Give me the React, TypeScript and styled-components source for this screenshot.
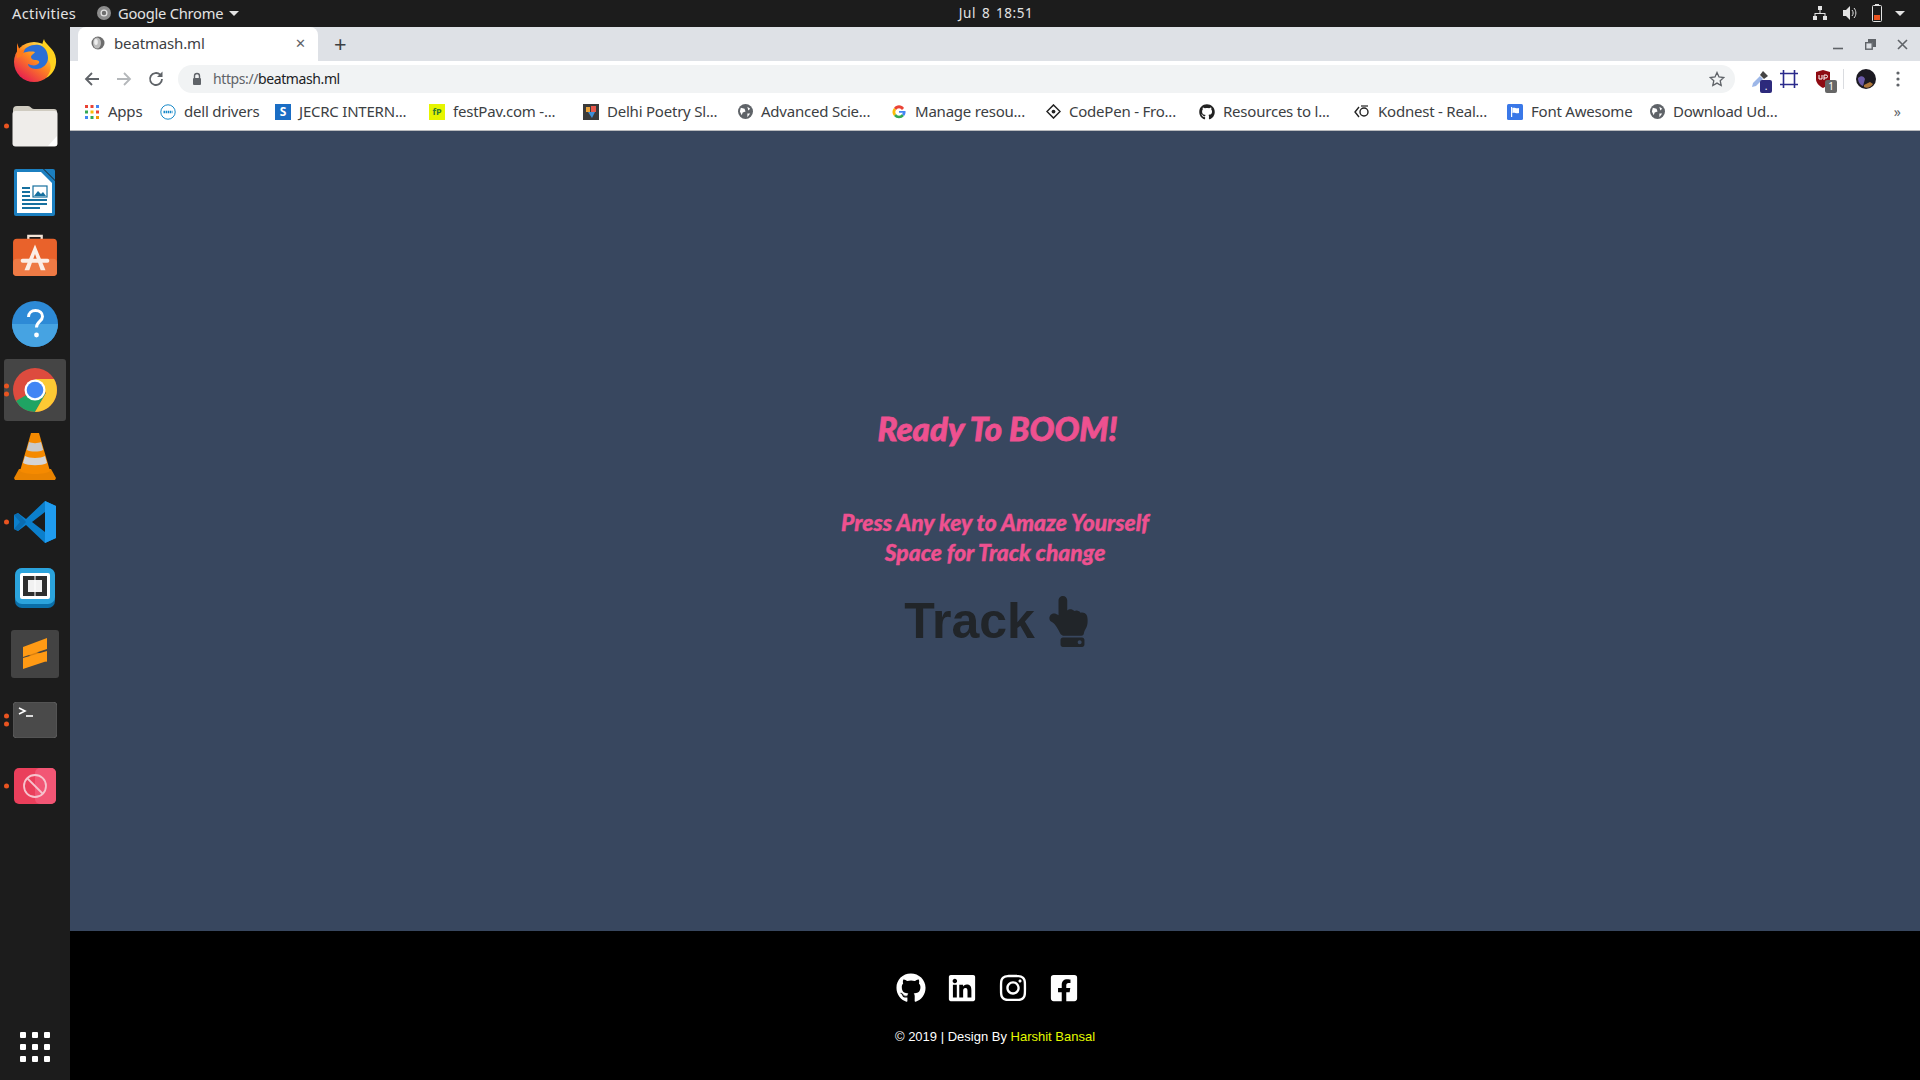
import React from 'react';
import styled, {createGlobalStyle} from 'styled-components';
import {FaGithub, FaLinkedin, FaInstagram, FaFacebookSquare, FaHandPointUp} from 'react-icons/fa';

const GlobalStyle = createGlobalStyle`
  html, body {
    margin: 0;
    padding: 0;
    height: 100%;
    overflow: hidden;
    background: #1c1c1c;
  }
  * {
    box-sizing: border-box;
  }
`
const Screen = styled.div`
  display: grid;
  grid-template-rows: 27px 1fr;
  grid-template-columns: 70px 1fr;
  width: 1920px;
  height: 1080px;
  font-family: "Noto Sans", sans-serif;
`
const TopBar = styled.header`
  grid-column: 1 / 3;
  display: grid;
  grid-template-columns: 1fr auto 1fr;
  align-items: center;
  background: #1c1c1c;
  color: #e3e3e3;
  font-size: 14.7px;
  padding: 0 12px 1px;
`
const TopLeft = styled.div`
  display: flex;
  align-items: center;
`
const ActivitiesLabel = styled.span`
  width: 85px;
  letter-spacing: 0.3px;
`
const AppName = styled.span`
  margin-left: 7px;
  letter-spacing: -0.25px;
`
const Caret = styled.span`
  width: 0;
  height: 0;
  margin-left: ${p => p.$gap ?? 6}px;
  border-left: 5px solid transparent;
  border-right: 5px solid transparent;
  border-top: 5px solid #e3e3e3;
`
const Clock = styled.div`
  margin-left: 72px;
  font-size: 13.5px;
  word-spacing: 2px;
  letter-spacing: 0.5px;
`
const TopRight = styled.div`
  display: flex;
  align-items: center;
  justify-content: flex-end;
  gap: 14px;
  padding-right: 3px;
`
const Dock = styled.nav`
  display: flex;
  flex-direction: column;
  background: #1c1c1c;
`
const DockItem = styled.div`
  position: relative;
  flex: none;
  display: flex;
  align-items: center;
  justify-content: center;
  height: 66px;
  ${p => p.$push && 'margin-top: auto;'}
`
const ActiveTile = styled.div`
  display: flex;
  align-items: center;
  justify-content: center;
  width: 62px;
  height: 62px;
  border-radius: 3px;
  background: #454545;
`
const RunDots = styled.div`
  position: absolute;
  left: 4px;
  top: 50%;
  transform: translateY(-50%);
  display: flex;
  flex-direction: column;
  gap: 3px;
`
const RunDot = styled.span`
  width: 5px;
  height: 5px;
  border-radius: 50%;
  background: #e95420;
`
const AppGrid = styled.div`
  display: grid;
  grid-template-columns: repeat(3, 6px);
  gap: 6px;
`
const GridDot = styled.span`
  width: 6px;
  height: 6px;
  border-radius: 1px;
  background: #fff;
`
const Browser = styled.div`
  display: flex;
  flex-direction: column;
  min-width: 0;
`
const TabStrip = styled.div`
  display: flex;
  align-items: flex-end;
  flex: none;
  height: 34px;
  padding-left: 8px;
  background: #dee1e6;
`
const Tab = styled.div`
  display: flex;
  align-items: center;
  width: 240px;
  height: 34px;
  padding: 0 12px 2px 13px;
  border-radius: 8px 8px 0 0;
  background: #fff;
  color: #3c4043;
  font-size: 15px;
`
const TabTitle = styled.span`
  flex: 1;
  margin-left: 9px;
  letter-spacing: -0.15px;
`
const TabClose = styled.span`
  color: #5f6368;
  font-size: 13px;
  line-height: 1;
`
const NewTab = styled.span`
  margin: 0 0 2px 16px;
  color: #3c4043;
  font-size: 22px;
  font-weight: 400;
  align-self: center;
  line-height: 1;
`
const WindowControls = styled.div`
  display: flex;
  align-items: center;
  gap: 21px;
  margin-left: auto;
  padding-right: 12px;
  height: 100%;
`
const Toolbar = styled.div`
  display: flex;
  align-items: center;
  flex: none;
  height: 32px;
  padding: 4px 0 0 13px;
  background: #fff;
`
const NavGroup = styled.div`
  display: flex;
  align-items: center;
  gap: 14px;
  width: 95px;
`
const Omnibox = styled.div`
  display: flex;
  align-items: center;
  width: 1557px;
  height: 28px;
  padding: 0 10px 0 13px;
  border-radius: 14px;
  background: #f1f3f4;
  font-size: 14px;
  color: #202124;
`
const UrlText = styled.span`
  flex: 1;
  margin-left: 10px;
  padding-bottom: 2px;
  letter-spacing: -0.4px;
`
const UrlScheme = styled.span`
  color: #5f6368;
`
const ExtensionGroup = styled.div`
  display: flex;
  align-items: center;
  padding-left: 10px;
`
const ExtensionSlot = styled.div`
  position: relative;
  display: flex;
  justify-content: center;
  width: ${p => p.$w}px;
`
const ExtensionBadge = styled.span`
  position: absolute;
  right: ${p => p.$right}px;
  bottom: -5px;
  width: ${p => p.$w}px;
  height: 13px;
  border-radius: 2px;
  background: ${p => p.$bg};
  color: #fff;
  font-size: 10px;
  line-height: 13px;
  text-align: center;
`
const Divider = styled.span`
  width: 1px;
  height: 20px;
  background: #dadce0;
  margin-right: 12px;
`
const BookmarkBar = styled.div`
  display: flex;
  align-items: center;
  flex: none;
  height: 38px;
  padding-left: 14px;
  background: #fff;
  border-bottom: 1px solid #b9bbbe;
  color: #3c4043;
  font-size: 15px;
`
const Bookmark = styled.div`
  display: flex;
  align-items: center;
  gap: 8px;
  width: ${p => p.$w}px;
  flex: none;
`
const BookmarkLabel = styled.span`
  padding-bottom: 1px;
  white-space: nowrap;
  letter-spacing: -0.22px;
`
const Favicon = styled.span`
  display: flex;
  align-items: center;
  justify-content: center;
  flex: none;
  width: 16px;
  height: 16px;
  background: ${p => p.$bg ?? 'transparent'};
  color: ${p => p.$fg ?? '#fff'};
  font-size: ${p => p.$size ?? 11}px;
  font-weight: 700;
  line-height: 1;
`
const Overflow = styled.span`
  margin-left: auto;
  padding-right: 19px;
  color: #5f6368;
  font-size: 14px;
`
const Page = styled.main`
  flex: 1;
  display: flex;
  flex-direction: column;
  align-items: center;
  padding-top: 277px;
  background: #38475f;
  min-height: 0;
`
const Heading = styled.h1`
  margin: 0 0 0 5px;
  color: #ee5190;
  font-family: "Lato", sans-serif;
  font-size: 33px;
  font-style: italic;
  font-weight: 900;
  line-height: 40px;
  -webkit-text-stroke: 0.8px #ee5190;
`
const Hint = styled.p`
  margin: 59px 0 0;
  color: #ee5190;
  font-family: "Lato", sans-serif;
  font-size: 22.8px;
  font-style: italic;
  font-weight: 900;
  line-height: 30px;
  text-align: center;
  -webkit-text-stroke: 0.4px #ee5190;
`
const TrackLabel = styled.div`
  display: flex;
  align-items: center;
  gap: 8px;
  margin: 25px 0 0 8px;
  color: #212529;
  font-family: "Liberation Sans", sans-serif;
  font-size: 50px;
  font-weight: 700;
  line-height: 58px;
`
const Footer = styled.footer`
  flex: none;
  display: flex;
  flex-direction: column;
  align-items: center;
  height: 149px;
  padding-top: 42px;
  background: #000;
  color: #fff;
  font-family: "Liberation Sans", sans-serif;
  font-size: 13px;
`
const SocialRow = styled.div`
  display: flex;
  gap: 21px;
  font-size: 30px;
  line-height: 0;
  margin-right: 15px;
`
const Credit = styled.div`
  margin-top: 26px;
`
const CreditName = styled.span`
  color: #e4fb00;
`

const Firefox = () => (
	<svg width="46" height="46" viewBox="0 0 46 46">
		<defs>
			<linearGradient id="ffa" x1="0.8" y1="0.1" x2="0.2" y2="0.9">
				<stop offset="0" stopColor="#ffe14a"/>
				<stop offset="0.45" stopColor="#ff8a1f"/>
				<stop offset="1" stopColor="#e8234e"/>
			</linearGradient>
		</defs>
		<circle cx="22" cy="25" r="20" fill="url(#ffa)"/>
		<path d="M32 2c1 6 11 9 12 20 1 9-4 16-10 19 5-6 6-12 3-17-2-4-7-7-7-14 0-3 1-6 2-8z" fill="#ffd21f"/>
		<path d="M10 16c3-6 10-9 17-8 5 1 9 6 9 13 0 6-5 11-12 11-5 0-8-3-8-5 4 2 9 2 11-1 1-2-1-3-4-3-2 0-4-1-4-3 0-2 3-3 4-5-4-1-9 0-13 1z" fill="#2b6fd6"/>
		<path d="M5 6l3 8 5-2-3 7-5 2z" fill="#ff7a1a"/>
	</svg>
)
const Folder = () => (
	<svg width="46" height="42" viewBox="0 0 46 42">
		<path d="M1 5a4 4 0 0 1 4-4h11c3 0 3 3 6 3h20a3 3 0 0 1 3 3v8H1z" fill="#cfcbc0"/>
		<rect x="0.5" y="6" width="45" height="35.5" rx="3" fill="#efedea"/>
		<path d="M36 41l9-10v8a2 2 0 0 1-2 2z" fill="#fff"/>
	</svg>
)
const Writer = () => (
	<svg width="42" height="48" viewBox="0 0 42 48">
		<path d="M2 1h27l12 12v33a2 2 0 0 1-2 2H2a2 2 0 0 1-2-2V3a2 2 0 0 1 2-2z" fill="#1b7fc0"/>
		<path d="M3 4h24l11 11v30H3z" fill="#fff"/>
		<path d="M30 1h9a2 2 0 0 1 2 2v9z" fill="#1b7fc0"/>
		<path d="M8 19h8v2H8zM8 23h8v2H8zM8 27h8v2H8zM8 31h25v2H8zM8 35h25v2H8zM8 39h18v2H8z" fill="#16709f"/>
		<rect x="19" y="18" width="14" height="11" fill="none" stroke="#16709f" strokeWidth="1.2"/>
		<path d="M20 28l4-5 3 3 2-2 3 4z" fill="#16709f"/>
	</svg>
)
const SoftwareSvg = styled.svg`
  margin-top: -7px;
`
const Software = () => (
	<SoftwareSvg width="44" height="42" viewBox="0 0 46 44">
		<path d="M16 7V2h14v5" fill="none" stroke="#f3e3d6" strokeWidth="2.4"/>
		<rect x="0" y="5" width="46" height="39" rx="4" fill="#e9622b"/>
		<rect x="0" y="26" width="46" height="18" rx="4" fill="#ee7a45"/>
		<path d="M23 11L12 38h5l6-17 6 17h5z" fill="#fbeee6"/>
		<rect x="8" y="26" width="30" height="4" rx="2" fill="#fbeee6"/>
	</SoftwareSvg>
)
const Help = () => (
	<svg width="46" height="46" viewBox="0 0 46 46">
		<circle cx="23" cy="23" r="23" fill="#2d8ad6"/>
		<path d="M0 23a23 23 0 0 0 46 0z" fill="#46a3e2"/>
		<path d="M16.5 16c0-4 3-6.500 7-6.500s7 2.500 7 6c0 5-6 5-6 11" fill="none" stroke="#fff" strokeWidth="3"/>
		<circle cx="24.500" cy="34" r="2.400" fill="#fff"/>
	</svg>
)
const Chrome = ({size = 44}: {size?: number}) => (
	<svg width={size} height={size} viewBox="0 0 44 44">
		<circle cx="22" cy="22" r="22" fill="#dd4b3e"/>
		<path d="M22 22L3 33a22 22 0 0 0 19 11l11-19z" fill="#1fa463"/>
		<path d="M22 11h19a22 22 0 0 1-19 33l11-19z" fill="#fcc934"/>
		<circle cx="22" cy="22" r="10.500" fill="#fff"/>
		<circle cx="22" cy="22" r="8.300" fill="#4285f4"/>
	</svg>
)
const GreyChrome = () => (
	<svg width="14" height="14" viewBox="0 0 44 44">
		<circle cx="22" cy="22" r="22" fill="#8d8d8d"/>
		<circle cx="22" cy="22" r="11" fill="#e3e3e3"/>
		<circle cx="22" cy="22" r="7" fill="#6e6e6e"/>
	</svg>
)
const Vlc = () => (
	<svg width="42" height="48" viewBox="0 0 42 48">
		<path d="M0 46l5-9h32l5 9-1 2H1z" fill="#e98300"/>
		<path d="M17 1h8l11 38c-4 4-26 4-30 0z" fill="#f58a00"/>
		<path d="M15 10c3 1.500 9 1.500 12 0l2.200 8c-4 2-12.400 2-16.400 0z" fill="#c9c9c9"/>
		<path d="M11 24c4 2.500 16 2.500 20 0l2 7c-5 3-19 3-24 0z" fill="#d4d4d4"/>
	</svg>
)
const VsCode = () => (
	<svg width="42" height="42" viewBox="0 0 42 42">
		<path d="M31 0l11 5v32l-11 5L12 24l-8 6-4-2v-14l4-2 8 6z" fill="#0b7fcc"/>
		<path d="M31 0l11 5v32l-11 5z" fill="#1f9cf0"/>
		<path d="M31 11L18 21l13 10z" fill="#1c1c1c"/>
		<path d="M0 14l4-2 8 9-8 9-4-2 6-7z" fill="#0a6cb0"/>
	</svg>
)
const Brackets = () => (
	<svg width="40" height="40" viewBox="0 0 40 40">
		<rect width="40" height="40" rx="7" fill="#0a6ea8"/>
		<rect width="40" height="36" rx="7" fill="#2ba3dc"/>
		<rect x="5" y="5" width="30" height="26" rx="2" fill="#fff"/>
		<rect x="8" y="8" width="24" height="20" fill="#2e2e2e"/>
		<rect x="13" y="12" width="14" height="12" fill="#f1f1f1"/>
		<rect x="19.500" y="5" width="1" height="26" fill="#fff"/>
	</svg>
)
const Sublime = () => (
	<svg width="48" height="48" viewBox="0 0 48 48">
		<rect width="48" height="48" rx="3" fill="#434343"/>
		<path d="M12 17l24 9v6L12 23z" fill="#d97f0e"/>
		<path d="M36 8v11L12 27V17z" fill="#ff9a14"/>
		<path d="M12 39V28l24-7v10z" fill="#ff9a14"/>
	</svg>
)
const Terminal = () => (
	<svg width="44" height="36" viewBox="0 0 44 36">
		<rect width="44" height="36" rx="4" fill="#4a4a4a" stroke="#5c5c5c"/>
		<path d="M6 6l6 3-6 3" fill="none" stroke="#fff" strokeWidth="1.600"/>
		<path d="M13 14h7" stroke="#fff" strokeWidth="1.600"/>
	</svg>
)
const Blocked = () => (
	<svg width="42" height="36" viewBox="0 0 42 36">
		<rect width="42" height="36" rx="5" fill="#ea3f5b"/>
		<rect x="21" width="21" height="36" rx="5" fill="#f25675"/>
		<circle cx="21" cy="18" r="11" fill="none" stroke="#f6c3cd" strokeWidth="1.800"/>
		<path d="M13 10l16 16" stroke="#f6c3cd" strokeWidth="1.800"/>
	</svg>
)
const BackArrow = ({color}: {color: string}) => (
	<svg width="18" height="18" viewBox="0 0 18 18">
		<path d="M16 9H3M9 3L3 9l6 6" fill="none" stroke={color} strokeWidth="1.800"/>
	</svg>
)
const ForwardArrow = ({color}: {color: string}) => (
	<svg width="18" height="18" viewBox="0 0 18 18">
		<path d="M2 9h13M9 3l6 6-6 6" fill="none" stroke={color} strokeWidth="1.800"/>
	</svg>
)
const Reload = () => (
	<svg width="18" height="18" viewBox="0 0 18 18">
		<path d="M15 9a6 6 0 1 1-1.800-4.300" fill="none" stroke="#5f6368" strokeWidth="1.800"/>
		<path d="M15.500 1.500v5.500H10z" fill="#5f6368"/>
	</svg>
)
const Lock = () => (
	<svg width="12" height="14" viewBox="0 0 12 14">
		<path d="M3.500 6V4a2.500 2.500 0 0 1 5 0v2" fill="none" stroke="#5f6368" strokeWidth="1.400"/>
		<rect x="2" y="6" width="8" height="7" rx="1" fill="#5f6368"/>
	</svg>
)
const Star = () => (
	<svg width="16" height="16" viewBox="0 0 16 16">
		<path d="M8 1.500l2 4.500 4.800.5-3.600 3.200 1 4.800L8 12.100l-4.200 2.400 1-4.800L1.200 6.500 6 6z" fill="none" stroke="#5f6368" strokeWidth="1.300"/>
	</svg>
)
const Dropper = () => (
	<svg width="18" height="18" viewBox="0 0 18 18">
		<path d="M1 17l1-4 7-7 3 3-7 7z" fill="#9db7e8"/>
		<path d="M9 5l3-4 5 5-4 3z" fill="#444"/>
	</svg>
)
const HashIcon = () => (
	<svg width="18" height="18" viewBox="0 0 18 18">
		<path d="M3.500 0v18M14.500 0v18M0 3.500h18M0 14.500h18" stroke="#2a2a8c" strokeWidth="1.600" fill="none"/>
	</svg>
)
const Shield = () => (
	<svg width="16" height="18" viewBox="0 0 16 18">
		<path d="M8 0l7 2v7c0 4-3 7-7 9-4-2-7-5-7-9V2z" fill="#8e0a12"/>
		<path d="M4 5v4h3V5M9 10V5h2a1.500 1.500 0 0 1 0 3H9" fill="none" stroke="#fff" strokeWidth="1"/>
	</svg>
)
const Avatar = () => (
	<svg width="20" height="20" viewBox="0 0 20 20">
		<circle cx="10" cy="10" r="10" fill="#1c1a22"/>
		<path d="M2 9c3-3 6-2 7 1l-2 7c-3-1-5-4-5-8z" fill="#6b5aa8"/>
		<path d="M8 16l6-3 3 2c-2 3-6 5-9 3z" fill="#b0783a"/>
	</svg>
)
const Kebab = () => (
	<svg width="4" height="16" viewBox="0 0 4 16">
		<circle cx="2" cy="2" r="1.600" fill="#5f6368"/>
		<circle cx="2" cy="8" r="1.600" fill="#5f6368"/>
		<circle cx="2" cy="14" r="1.600" fill="#5f6368"/>
	</svg>
)
const Globe = () => (
	<svg width="15" height="15" viewBox="0 0 16 16">
		<circle cx="8" cy="8" r="8" fill="#5f6368"/>
		<path d="M3 4l4 1 1 3-3 1-1 3-2-4zM10 3l3 2-2 2zM10 10l3 0-3 4z" fill="#fff"/>
	</svg>
)
const AppsIcon = () => (
	<svg width="14" height="14" viewBox="0 0 14 14">
		{['#ea4335', '#ea4335', '#4285f4', '#34a853', '#fbbc05', '#ea4335', '#4285f4', '#34a853', '#f29900'].map((c, i) => (
			<rect key={i} x={(i % 3) * 5.500} y={Math.floor(i / 3) * 5.500} width="3" height="3" fill={c}/>
		))}
	</svg>
)
const DellIcon = () => (
	<svg width="16" height="16" viewBox="0 0 16 16">
		<circle cx="8" cy="8" r="7.200" fill="none" stroke="#1789c9" strokeWidth="1"/>
		<path d="M3.500 8h9" stroke="#1789c9" strokeWidth="2.400" strokeDasharray="1.500 .6"/>
	</svg>
)
const GoogleIcon = () => (
	<svg width="14" height="14" viewBox="0 0 14 14">
		<path d="M12 3A6 6 0 0 0 2 3l2 2a3.500 3.500 0 0 1 6 0z" fill="#ea4335"/>
		<path d="M2 3a6.500 6.500 0 0 0 0 8l2-2a3.500 3.500 0 0 1 0-4z" fill="#fbbc05"/>
		<path d="M2 11a6.500 6.500 0 0 0 10 0l-2-2a3.500 3.500 0 0 1-6 0z" fill="#34a853"/>
		<path d="M7 6h6.500c.3 2-.3 3.800-1.500 5l-2-2c.5-.4.8-.8 1-1.200H7z" fill="#4285f4"/>
	</svg>
)
const CodepenIcon = () => (
	<svg width="15" height="15" viewBox="0 0 16 16">
		<path d="M8 1l7 7-7 7-7-7z" fill="#fff" stroke="#222" strokeWidth="1.600"/>
		<circle cx="8" cy="8" r="2" fill="#222"/>
	</svg>
)
const KodnestIcon = () => (
	<svg width="16" height="14" viewBox="0 0 16 14">
		<path d="M5 2L1 7l4 5" fill="none" stroke="#222" strokeWidth="1.400"/>
		<circle cx="10" cy="7" r="4" fill="none" stroke="#222" strokeWidth="1.400"/>
		<path d="M7 1h7" stroke="#222" strokeWidth="1.200"/>
	</svg>
)
const PoetryIcon = () => (
	<svg width="16" height="16" viewBox="0 0 16 16">
		<rect width="16" height="16" fill="#3a3a3a"/>
		<path d="M3 3h4v5H3z" fill="#e9a23b"/>
		<path d="M8 2h5v6H8z" fill="#e8574a"/>
		<path d="M5 8h7l-3 6z" fill="#3f8fd8"/>
	</svg>
)
const FaFlag = () => (
	<svg width="16" height="16" viewBox="0 0 16 16">
		<rect width="16" height="16" rx="1.500" fill="#3a78e8"/>
		<path d="M4 3h1.200v10H4zM5.500 4c2-1 3.500 1 6.500 0v5c-3 1-4.500-1-6.500 0z" fill="#fff"/>
	</svg>
)
const DropletFavicon = () => (
	<svg width="14" height="16" viewBox="0 0 14 16">
		<circle cx="7" cy="8" r="6.500" fill="#6d6d6d"/>
		<ellipse cx="6" cy="8" rx="4" ry="5.500" fill="#bcbcbc"/>
		<ellipse cx="5" cy="7" rx="1.800" ry="3" fill="#eee"/>
	</svg>
)
const GithubFavicon = () => <FaGithub size={16} color="#222"/>

const NetworkIcon = () => (
	<svg width="16" height="16" viewBox="0 0 16 16">
		<path d="M6 1h4v4H6zM1 11h4v4H1zM11 11h4v4h-4zM7.500 5h1v3H13.500v3h-1V9H3.500v2h-1V8h5z" fill="#e3e3e3"/>
	</svg>
)
const VolumeIcon = () => (
	<svg width="16" height="16" viewBox="0 0 16 16">
		<path d="M1 5h3l4-4v14l-4-4H1z" fill="#e3e3e3"/>
		<path d="M10 5c1.500 2 1.500 4 0 6M12 3c2.500 3 2.500 7 0 10" fill="none" stroke="#e3e3e3" strokeWidth="1"/>
	</svg>
)
const BatteryIcon = () => (
	<svg width="10" height="18" viewBox="0 0 10 18">
		<rect x="3" y="0" width="4" height="2" fill="#e3e3e3"/>
		<rect x="0.500" y="1.500" width="9" height="16" rx="1" fill="none" stroke="#e3e3e3"/>
		<rect x="2" y="11" width="6" height="5" fill="#e95420"/>
	</svg>
)
const MinimizeIcon = () => (
	<svg width="11" height="11" viewBox="0 0 11 11"><path d="M0 9.500h10" stroke="#5f6368" strokeWidth="1.600"/></svg>
)
const RestoreIcon = () => (
	<svg width="11" height="11" viewBox="0 0 11 11">
		<path d="M3 0h8v8H8V3H3z" fill="#5f6368"/>
		<rect x="0.700" y="3.700" width="6.500" height="6.500" fill="none" stroke="#5f6368" strokeWidth="1.400"/>
	</svg>
)
const CloseIcon = () => (
	<svg width="11" height="11" viewBox="0 0 11 11"><path d="M1 1l9 9M10 1l-9 9" stroke="#5f6368" strokeWidth="1.600"/></svg>
)

const dockApps = [
	{icon: <Firefox/>, dots: 0},
	{icon: <Folder/>, dots: 1},
	{icon: <Writer/>, dots: 0},
	{icon: <Software/>, dots: 0},
	{icon: <Help/>, dots: 0},
	{icon: <ActiveTile><Chrome/></ActiveTile>, dots: 2},
	{icon: <Vlc/>, dots: 0},
	{icon: <VsCode/>, dots: 1},
	{icon: <Brackets/>, dots: 0},
	{icon: <Sublime/>, dots: 0},
	{icon: <Terminal/>, dots: 2},
	{icon: <Blocked/>, dots: 1},
]

const bookmarks = [
	{label: 'Apps', w: 76, icon: <Favicon><AppsIcon/></Favicon>},
	{label: 'dell drivers', w: 115, icon: <DellIcon/>},
	{label: 'JECRC INTERN...', w: 154, icon: <Favicon $bg="#1a6dc4" $size={12}>S</Favicon>},
	{label: 'festPav.com -...', w: 154, icon: <Favicon $bg="#e6f500" $fg="#2e7d32" $size={9}>fP</Favicon>},
	{label: 'Delhi Poetry Sl...', w: 154, icon: <PoetryIcon/>},
	{label: 'Advanced Scie...', w: 154, icon: <Favicon><Globe/></Favicon>},
	{label: 'Manage resou...', w: 154, icon: <Favicon><GoogleIcon/></Favicon>},
	{label: 'CodePen - Fro...', w: 154, icon: <Favicon><CodepenIcon/></Favicon>},
	{label: 'Resources to l...', w: 155, icon: <GithubFavicon/>},
	{label: 'Kodnest - Real...', w: 153, icon: <KodnestIcon/>},
	{label: 'Font Awesome', w: 142, icon: <FaFlag/>},
	{label: 'Download Ud...', w: 140, icon: <Favicon><Globe/></Favicon>},
]

const App = () => {
	return (
		<Screen>
			<GlobalStyle/>
			<TopBar>
				<TopLeft>
					<ActivitiesLabel>Activities</ActivitiesLabel>
					<GreyChrome/>
					<AppName>Google Chrome</AppName>
					<Caret/>
				</TopLeft>
				<Clock>Jul 8 18:51</Clock>
				<TopRight>
					<NetworkIcon/>
					<VolumeIcon/>
					<BatteryIcon/>
					<Caret $gap={-1}/>
				</TopRight>
			</TopBar>
			<Dock>
				{dockApps.map((app, i) => (
					<DockItem key={i}>
						{app.dots > 0 && <RunDots>{Array.from({length: app.dots}).map((_, d) => <RunDot key={d}/>)}</RunDots>}
						{app.icon}
					</DockItem>
				))}
				<DockItem $push>
					<AppGrid>{Array.from({length: 9}).map((_, i) => <GridDot key={i}/>)}</AppGrid>
				</DockItem>
			</Dock>
			<Browser>
				<TabStrip>
					<Tab>
						<DropletFavicon/>
						<TabTitle>beatmash.ml</TabTitle>
						<TabClose>✕</TabClose>
					</Tab>
					<NewTab>+</NewTab>
					<WindowControls>
						<MinimizeIcon/>
						<RestoreIcon/>
						<CloseIcon/>
					</WindowControls>
				</TabStrip>
				<Toolbar>
					<NavGroup>
						<BackArrow color="#5f6368"/>
						<ForwardArrow color="#b4b7ba"/>
						<Reload/>
					</NavGroup>
					<Omnibox>
						<Lock/>
						<UrlText><UrlScheme>https://</UrlScheme>beatmash.ml</UrlText>
						<Star/>
					</Omnibox>
					<ExtensionGroup>
						<ExtensionSlot $w={30}>
							<Dropper/>
							<ExtensionBadge $right={3} $w={12} $bg="#2d2a7c">.</ExtensionBadge>
						</ExtensionSlot>
						<ExtensionSlot $w={28}><HashIcon/></ExtensionSlot>
						<ExtensionSlot $w={40}>
							<Shield/>
							<ExtensionBadge $right={6} $w={12} $bg="#666">1</ExtensionBadge>
						</ExtensionSlot>
						<Divider/>
						<Avatar/>
						<ExtensionSlot $w={44}><Kebab/></ExtensionSlot>
					</ExtensionGroup>
				</Toolbar>
				<BookmarkBar>
					{bookmarks.map(b => (
						<Bookmark key={b.label} $w={b.w}>
							{b.icon}
							<BookmarkLabel>{b.label}</BookmarkLabel>
						</Bookmark>
					))}
					<Overflow>»</Overflow>
				</BookmarkBar>
				<Page>
					<Heading>Ready To BOOM!</Heading>
					<Hint>Press Any key to Amaze Yourself<br/>Space for Track change</Hint>
					<TrackLabel>Track <FaHandPointUp size={51}/></TrackLabel>
				</Page>
				<Footer>
					<SocialRow>
						<FaGithub/>
						<FaLinkedin/>
						<FaInstagram/>
						<FaFacebookSquare/>
					</SocialRow>
					<Credit>© 2019 | Design By <CreditName>Harshit Bansal</CreditName></Credit>
				</Footer>
			</Browser>
		</Screen>
	);
};

export default App;
